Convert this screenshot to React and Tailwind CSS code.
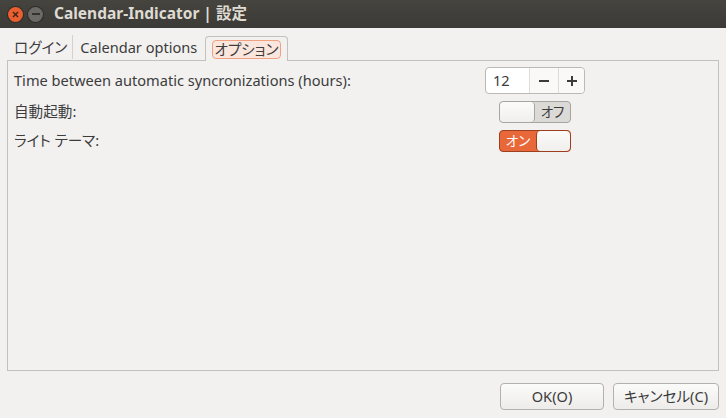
import React from "react";

const font = {
  fontFamily: '"Noto Sans", "Noto Sans CJK JP", sans-serif',
  fontFeatureSettings: '"palt"',
};

function Switch({ on }) {
  if (on) {
    return (
      <div className="flex h-[22px] w-[72px] shrink-0 rounded-[4px] border border-[#9c3f1f] bg-[#e9683a] overflow-hidden">
        <div className="flex w-[36px] items-center justify-center text-[13.5px] text-white">オン</div>
        <div className="flex-1 rounded-[4px] border-l border-[#9c3f1f] bg-gradient-to-b from-[#fbfbfa] to-[#f0efed]" />
      </div>
    );
  }
  return (
    <div className="flex h-[22px] w-[72px] shrink-0 rounded-[4px] border border-[#a8a5a0] bg-[#dcdad6] overflow-hidden">
      <div className="w-[35px] rounded-[4px] border-r border-[#a8a5a0] bg-gradient-to-b from-[#fbfbfa] to-[#f0efed]" />
      <div className="flex flex-1 items-center justify-center text-[13.5px] text-[#3c3c3c]">オフ</div>
    </div>
  );
}

export default function App() {
  return (
    <div className="flex h-[418px] w-[726px] flex-col bg-[#f2f1f0] text-[#3c3c3c]" style={font}>
      {/* title bar */}
      <div className="flex h-[28px] items-center bg-gradient-to-b from-[#45443f] to-[#3b3a36] pl-[8px]">
        <div className="flex h-[15px] w-[15px] items-center justify-center rounded-full bg-[#e95f30] shadow-[0_0_0_1px_#2d2c29]">
          <svg width="7" height="7" viewBox="0 0 7 7">
            <path d="M1 1L6 6M6 1L1 6" stroke="#3a2218" strokeWidth="1.4" />
          </svg>
        </div>
        <div className="ml-[5px] flex h-[15px] w-[15px] items-center justify-center rounded-full bg-[#6b6a65] shadow-[0_0_0_1px_#2d2c29]">
          <div className="h-[1.5px] w-[8px] bg-[#34332f]" />
        </div>
        <div className="ml-[11px] text-[15.5px] font-bold text-[#dfdbd2]">Calendar-Indicator | 設定</div>
      </div>

      {/* notebook */}
      <div className="mx-[7px] mt-[7px] flex flex-1 flex-col">
        <div className="flex h-[25px] items-end text-[14.6px]">
          <div className="flex h-full items-center pl-[7px] pr-[5px] text-[#3c3c3c]">ログイン</div>
          <div className="mb-[1px] h-[24px] w-px bg-[#d5d2cd]" />
          <div className="flex h-full items-center pl-[7px] pr-[8px]">Calendar options</div>
          <div className="relative top-[1px] flex h-[25px] items-center rounded-t-[4px] border border-b-0 border-[#c4c1bc] bg-[#f2f1f0] px-[6px]">
            <div className="rounded-[4px] border border-[#f0a182] bg-[#fae6dd] px-[1px] leading-[17px]">オプション</div>
          </div>
        </div>
        <div className="flex flex-1 flex-col border border-[#c4c1bc] px-[6px] pt-[6px] text-[14.6px]">
          <div className="flex h-[27px] items-center">
            <div className="flex-1">Time between automatic syncronizations (hours):</div>
            <div className="mr-[127px] flex h-[27px] w-[100px] shrink-0 rounded-[4px] border border-[#bcb9b4] bg-white">
              <div className="flex w-[43px] items-center pl-[7px]">12</div>
              <div className="flex w-[29px] items-center justify-center border-l border-[#dedcd8] bg-[#faf9f8]">
                <div className="h-[2px] w-[10px] bg-[#3c3c3c]" />
              </div>
              <div className="relative flex flex-1 items-center justify-center rounded-r-[4px] border-l border-[#dedcd8] bg-[#faf9f8]">
                <div className="h-[2px] w-[10px] bg-[#3c3c3c]" />
                <div className="absolute h-[10px] w-[2px] bg-[#3c3c3c]" />
              </div>
            </div>
          </div>
          <div className="mt-[7px] flex h-[22px] items-center">
            <div className="flex-1">自動起動:</div>
            <div className="mr-[141px]"><Switch on={false} /></div>
          </div>
          <div className="mt-[7px] flex h-[22px] items-center">
            <div className="flex-1">ライト テーマ:</div>
            <div className="mr-[141px]"><Switch on /></div>
          </div>
        </div>
      </div>

      {/* buttons */}
      <div className="flex justify-end gap-[9px] pb-[8px] pr-[7px] pt-[12px] text-[14.6px]">
        <div className="flex h-[27px] w-[104px] items-center justify-center rounded-[4px] border border-[#b4b1ac] bg-gradient-to-b from-[#fbfbfa] to-[#edecea]">OK(O)</div>
        <div className="flex h-[27px] w-[106px] items-center justify-center rounded-[4px] border border-[#b4b1ac] bg-gradient-to-b from-[#fbfbfa] to-[#edecea]">キャンセル(C)</div>
      </div>
    </div>
  );
}
